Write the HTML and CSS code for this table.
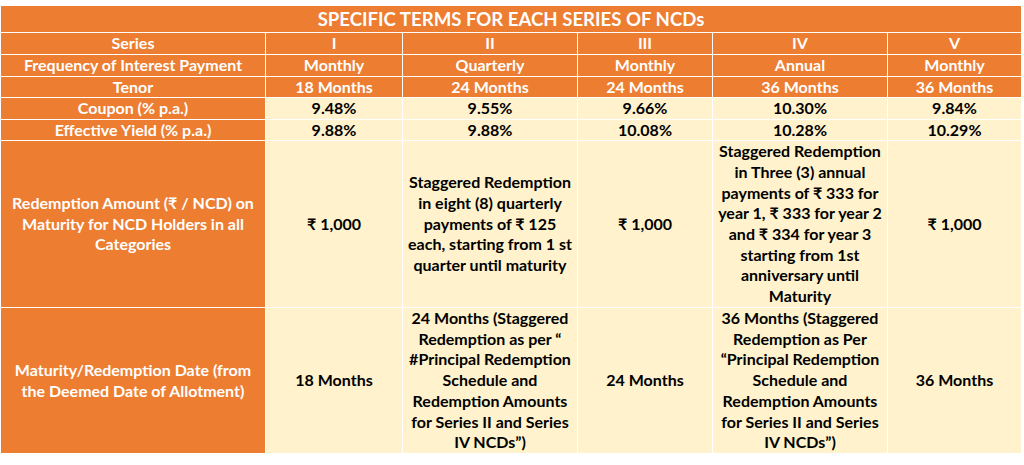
FILE: index.html
```html
<!DOCTYPE html>
<html>
<head>
<meta charset="utf-8">
<link rel="stylesheet" href="styles.css">
</head>
<body>
<div class="terms">
  <div class="cell title">SPECIFIC TERMS FOR EACH SERIES OF NCDs</div>

  <div class="cell head">Series</div>
  <div class="cell head">I</div>
  <div class="cell head">II</div>
  <div class="cell head">III</div>
  <div class="cell head">IV</div>
  <div class="cell head">V</div>

  <div class="cell head">Frequency of Interest Payment</div>
  <div class="cell head">Monthly</div>
  <div class="cell head">Quarterly</div>
  <div class="cell head">Monthly</div>
  <div class="cell head">Annual</div>
  <div class="cell head">Monthly</div>

  <div class="cell head">Tenor</div>
  <div class="cell head">18 Months</div>
  <div class="cell head">24 Months</div>
  <div class="cell head">24 Months</div>
  <div class="cell head">36 Months</div>
  <div class="cell head">36 Months</div>

  <div class="cell head">Coupon (% p.a.)</div>
  <div class="cell val">9.48%</div>
  <div class="cell val">9.55%</div>
  <div class="cell val">9.66%</div>
  <div class="cell val">10.30%</div>
  <div class="cell val">9.84%</div>

  <div class="cell head">Effective Yield (% p.a.)</div>
  <div class="cell val">9.88%</div>
  <div class="cell val">9.88%</div>
  <div class="cell val">10.08%</div>
  <div class="cell val">10.28%</div>
  <div class="cell val">10.29%</div>

  <div class="cell head">Redemption Amount (₹ / NCD) on<br>Maturity for NCD Holders in all<br>Categories</div>
  <div class="cell val">₹ 1,000</div>
  <div class="cell val">Staggered Redemption<br>in eight (8) quarterly<br>payments of ₹ 125<br>each, starting from 1 st<br>quarter until maturity</div>
  <div class="cell val">₹ 1,000</div>
  <div class="cell val">Staggered Redemption<br>in Three (3) annual<br>payments of ₹ 333 for<br>year 1, ₹ 333 for year 2<br>and ₹ 334 for year 3<br>starting from 1st<br>anniversary until<br>Maturity</div>
  <div class="cell val">₹ 1,000</div>

  <div class="cell head">Maturity/Redemption Date (from<br>the Deemed Date of Allotment)</div>
  <div class="cell val">18 Months</div>
  <div class="cell val">24 Months (Staggered<br>Redemption as per “<br>#Principal Redemption<br>Schedule and<br>Redemption Amounts<br>for Series II and Series<br>IV NCDs”)</div>
  <div class="cell val">24 Months</div>
  <div class="cell val">36 Months (Staggered<br>Redemption as Per<br>“Principal Redemption<br>Schedule and<br>Redemption Amounts<br>for Series II and Series<br>IV NCDs”)</div>
  <div class="cell val">36 Months</div>
</div>
</body>
</html>
```

FILE: styles.css
```css
html, body {
  margin: 0;
  padding: 0;
  background: #ffffff;
}

.terms {
  margin-top: 5px;
  width: 1022px;
  box-sizing: border-box;
  display: grid;
  grid-template-columns: 264px 136px 174px 134px 174px 133px;
  grid-template-rows: 26px 21px 21px 20px 21px 20px 166px 145px;
  gap: 1px;
  padding: 1px;
  background: #ffffff;
  font-family: Lato, "Noto Sans", "DejaVu Sans", sans-serif;
  font-weight: 700;
  font-size: 16px;
  line-height: 20.7px;
}

.cell {
  display: flex;
  align-items: center;
  justify-content: center;
  text-align: center;
  white-space: nowrap;
}

.title {
  grid-column: 1 / -1;
  background: #ed7d31;
  color: #ffffff;
  font-size: 18.6px;
}

.head {
  background: #ed7d31;
  color: #ffffff;
}

.val {
  background: #fff2cc;
  color: #000000;
}
```
